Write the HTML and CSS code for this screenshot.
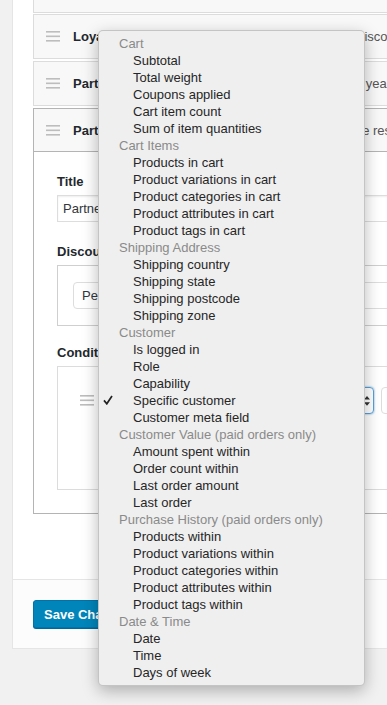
FILE: index.html
```html
<!DOCTYPE html>
<html>
<head>
<meta charset="utf-8">
<title>Discount rules</title>
<link rel="stylesheet" href="styles.css">
</head>
<body>
<div class="panel">
  <div class="content">
    <div class="card cut"></div>
    <div class="card">
      <div class="card-head">
        <svg class="handle" width="14" height="11" viewBox="0 0 14 11"><rect y="0" width="14" height="1.6"/><rect y="4.5" width="14" height="1.6"/><rect y="9" width="14" height="1.6"/></svg>
        <span class="name">Loyalty</span>
        <span class="desc">Discount</span>
      </div>
    </div>
    <div class="card">
      <div class="card-head">
        <svg class="handle" width="14" height="11" viewBox="0 0 14 11"><rect y="0" width="14" height="1.6"/><rect y="4.5" width="14" height="1.6"/><rect y="9" width="14" height="1.6"/></svg>
        <span class="name">Partner yearly</span>
        <span class="desc">1 year</span>
      </div>
    </div>
    <div class="card open">
      <div class="card-head">
        <svg class="handle" width="14" height="11" viewBox="0 0 14 11"><rect y="0" width="14" height="1.6"/><rect y="4.5" width="14" height="1.6"/><rect y="9" width="14" height="1.6"/></svg>
        <span class="name">Partner discount</span>
        <span class="desc shift">Time restricted</span>
      </div>
      <div class="card-body">
        <div class="field f-title">
          <label class="label">Title</label>
          <div class="input">Partner discount</div>
        </div>
        <div class="field f-discount">
          <label class="label">Discount</label>
          <div class="box">
            <div class="select">Percentage discount</div>
          </div>
        </div>
        <div class="field">
          <label class="label">Conditions</label>
          <div class="box cond">
            <div class="cond-row">
              <svg class="handle" width="14" height="11" viewBox="0 0 14 11"><rect y="0" width="14" height="1.6"/><rect y="4.5" width="14" height="1.6"/><rect y="9" width="14" height="1.6"/></svg>
              <div class="cond-select">
                <span>Specific customer</span>
                <svg width="6" height="10" viewBox="0 0 6 10"><path d="M3 0 L6 3.6 L0 3.6 Z M0 6.2 L6 6.2 L3 9.8 Z" fill="#333"/></svg>
              </div>
              <div class="cond-input"></div>
            </div>
          </div>
        </div>
      </div>
    </div>
  </div>
  <div class="footer">
    <button class="save">Save Changes</button>
  </div>
</div>

<div class="menu">
  <div class="group">Cart</div>
  <div class="item">Subtotal</div>
  <div class="item">Total weight</div>
  <div class="item">Coupons applied</div>
  <div class="item">Cart item count</div>
  <div class="item">Sum of item quantities</div>
  <div class="group">Cart Items</div>
  <div class="item">Products in cart</div>
  <div class="item">Product variations in cart</div>
  <div class="item">Product categories in cart</div>
  <div class="item">Product attributes in cart</div>
  <div class="item">Product tags in cart</div>
  <div class="group">Shipping Address</div>
  <div class="item">Shipping country</div>
  <div class="item">Shipping state</div>
  <div class="item">Shipping postcode</div>
  <div class="item">Shipping zone</div>
  <div class="group">Customer</div>
  <div class="item">Is logged in</div>
  <div class="item">Role</div>
  <div class="item">Capability</div>
  <div class="item selected"><svg class="check" width="10" height="10" viewBox="0 0 10 10"><path d="M1 5.4 L3.8 8.8 L9 1" fill="none" stroke="#222" stroke-width="1.7"/></svg>Specific customer</div>
  <div class="item">Customer meta field</div>
  <div class="group">Customer Value (paid orders only)</div>
  <div class="item">Amount spent within</div>
  <div class="item">Order count within</div>
  <div class="item">Last order amount</div>
  <div class="item">Last order</div>
  <div class="group">Purchase History (paid orders only)</div>
  <div class="item">Products within</div>
  <div class="item">Product variations within</div>
  <div class="item">Product categories within</div>
  <div class="item">Product attributes within</div>
  <div class="item">Product tags within</div>
  <div class="group">Date &amp; Time</div>
  <div class="item">Date</div>
  <div class="item">Time</div>
  <div class="item">Days of week</div>
</div>
</body>
</html>
```
FILE: styles.css
```css
* { box-sizing: border-box; }
html, body { margin: 0; padding: 0; }
body {
  background: #f1f1f1;
  font-family: "Liberation Sans", Arial, sans-serif;
  font-size: 13px;
  color: #32373c;
  width: 387px;
  height: 705px;
  overflow: hidden;
  position: relative;
}
.panel {
  margin-left: 12px;
  width: 700px;
  background: #fff;
  border: 1px solid #e5e5e5;
  border-top: 0;
}
.content { padding: 0 0 63px 20px; }
.card {
  width: 620px;
  border: 1px solid #dcdcdc;
  background: #f8f8f8;
  margin-bottom: 2px;
}
.card.cut { height: 13px; border-top: 0; margin-bottom: 1px; }
.card-head {
  display: grid;
  grid-template-columns: 14px 269px auto;
  column-gap: 13px;
  align-items: center;
  height: 43px;
  padding-left: 12px;
}
.handle { fill: #bdbdbd; display: block; }
.name { font-weight: bold; color: #23282d; white-space: nowrap; }
.desc { color: #555; white-space: nowrap; }
.desc.shift { margin-left: -14px; }
.card.open { border-color: #b4b4b4; }
.card.open .card-head { border-bottom: 1px solid #b4b4b4; }
.card-body { background: #fff; padding: 21px 0 23px 23px; }
.label {
  display: block;
  font-weight: bold;
  color: #23282d;
  line-height: 18px;
  margin-bottom: 4px;
}
.f-title { margin-bottom: 21px; }
.f-discount { margin-bottom: 18px; }
.input {
  height: 27px;
  width: 520px;
  border: 1px solid #ddd;
  padding: 0 5px;
  display: flex;
  align-items: center;
  box-shadow: inset 0 1px 2px rgba(0,0,0,.07);
  color: #32373c;
}
.box {
  width: 520px;
  border: 1px solid #cfcfcf;
  padding: 16px 15px;
}
.box.cond { border-color: #dcdcdc; padding: 20px 0 75px 22px; }
.select {
  height: 27px;
  width: 420px;
  border: 1px solid #ddd;
  border-radius: 4px;
  padding: 0 8px;
  display: flex;
  align-items: center;
  background: #fff;
}
.cond-row { display: flex; align-items: center; }
.cond-select {
  width: 264px;
  height: 27px;
  margin-left: 16px;
  border: 1px solid #5b9dd9;
  border-radius: 4px;
  box-shadow: 0 0 2px rgba(30,140,190,.8);
  display: flex;
  align-items: center;
  justify-content: space-between;
  padding: 0 3px 0 8px;
}
.cond-input {
  width: 150px;
  height: 27px;
  margin-left: 7px;
  border: 1px solid #ddd;
  border-radius: 4px;
}
.footer {
  border-top: 1px solid #e5e5e5;
  padding: 20px;
  background: #fcfcfc;
}
.save {
  display: block;
  height: 28px;
  padding: 0 10px;
  background: #0085ba;
  border: 1px solid #0073aa;
  border-radius: 3px;
  box-shadow: 0 1px 0 #006799;
  color: #fff;
  font-family: "Liberation Sans", Arial, sans-serif;
  font-size: 13px;
  font-weight: bold;
  white-space: nowrap;
}
.menu {
  position: absolute;
  left: 98px;
  top: 30px;
  width: 267px;
  background: #efefef;
  border: 1px solid rgba(0,0,0,.18);
  border-radius: 5px;
  box-shadow: 0 5px 16px rgba(0,0,0,.28);
  padding: 4px 0 4px;
  font-size: 13px;
  line-height: 17px;
}
.group { color: #8a8a8a; padding-left: 20px; white-space: nowrap; }
.item { color: #262626; padding-left: 34px; position: relative; white-space: nowrap; }
.check { position: absolute; left: 4px; top: 3px; }
```
